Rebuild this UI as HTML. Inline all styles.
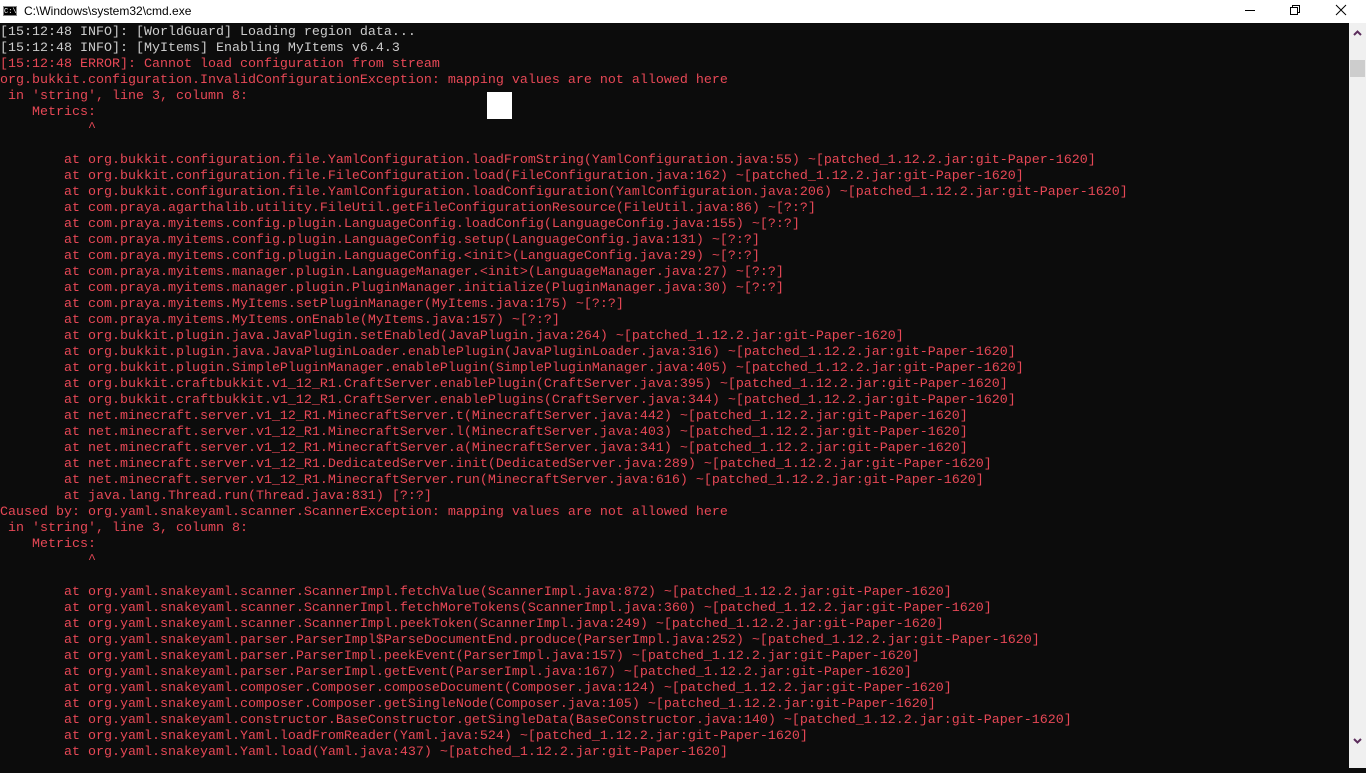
<!DOCTYPE html>
<html><head><meta charset="utf-8"><style>
html,body{margin:0;padding:0;width:1366px;height:768px;overflow:hidden;background:#0c0c0c;}
#tb{position:absolute;left:0;top:0;width:1366px;height:23px;background:#fff;font-family:"Liberation Sans",sans-serif;font-size:12px;color:#000;}
#tb .t{position:absolute;left:24px;top:4px;}
#ico{position:absolute;left:3px;top:6px;width:14px;height:10px;background:#000;border:1px solid #888;color:#fff;font-size:7px;line-height:10px;font-family:"Liberation Mono",monospace;box-sizing:border-box;}
#term{position:absolute;left:0;top:23px;width:1349px;height:745px;background:#0c0c0c;overflow:hidden;}
pre{margin:0;padding-top:2px;font-family:"Liberation Mono",monospace;font-size:13.33px;line-height:16px;color:#e74856;white-space:pre;}
.g{color:#cccccc;}
#sb{position:absolute;left:1349px;top:23px;width:17px;height:745px;background:#f0f0f0;}
#th{position:absolute;left:1350px;top:60px;width:15px;height:17px;background:#cdcdcd;}
#cur{position:absolute;left:487px;top:92px;width:25px;height:27px;background:#fff;}
</style></head><body>
<div id="tb"><div id="ico">C:\</div><span class="t">C:\Windows\system32\cmd.exe</span>
<svg style="position:absolute;left:1240px;top:0" width="126" height="23"><line x1="5" y1="10.5" x2="15" y2="10.5" stroke="#000"/><rect x="50.5" y="7.5" width="7" height="7" fill="none" stroke="#000"/><path d="M52.5 7.5V5.5H59.5V12.5H57.5" fill="none" stroke="#000"/><path d="M96 5L106 15M106 5L96 15" stroke="#000"/></svg></div>
<div id="term"><pre><span class="g">[15:12:48 INFO]: [WorldGuard] Loading region data...
[15:12:48 INFO]: [MyItems] Enabling MyItems v6.4.3</span>
[15:12:48 ERROR]: Cannot load configuration from stream
org.bukkit.configuration.InvalidConfigurationException: mapping values are not allowed here
 in 'string', line 3, column 8:
    Metrics:
           ^

        at org.bukkit.configuration.file.YamlConfiguration.loadFromString(YamlConfiguration.java:55) ~[patched_1.12.2.jar:git-Paper-1620]
        at org.bukkit.configuration.file.FileConfiguration.load(FileConfiguration.java:162) ~[patched_1.12.2.jar:git-Paper-1620]
        at org.bukkit.configuration.file.YamlConfiguration.loadConfiguration(YamlConfiguration.java:206) ~[patched_1.12.2.jar:git-Paper-1620]
        at com.praya.agarthalib.utility.FileUtil.getFileConfigurationResource(FileUtil.java:86) ~[?:?]
        at com.praya.myitems.config.plugin.LanguageConfig.loadConfig(LanguageConfig.java:155) ~[?:?]
        at com.praya.myitems.config.plugin.LanguageConfig.setup(LanguageConfig.java:131) ~[?:?]
        at com.praya.myitems.config.plugin.LanguageConfig.&lt;init&gt;(LanguageConfig.java:29) ~[?:?]
        at com.praya.myitems.manager.plugin.LanguageManager.&lt;init&gt;(LanguageManager.java:27) ~[?:?]
        at com.praya.myitems.manager.plugin.PluginManager.initialize(PluginManager.java:30) ~[?:?]
        at com.praya.myitems.MyItems.setPluginManager(MyItems.java:175) ~[?:?]
        at com.praya.myitems.MyItems.onEnable(MyItems.java:157) ~[?:?]
        at org.bukkit.plugin.java.JavaPlugin.setEnabled(JavaPlugin.java:264) ~[patched_1.12.2.jar:git-Paper-1620]
        at org.bukkit.plugin.java.JavaPluginLoader.enablePlugin(JavaPluginLoader.java:316) ~[patched_1.12.2.jar:git-Paper-1620]
        at org.bukkit.plugin.SimplePluginManager.enablePlugin(SimplePluginManager.java:405) ~[patched_1.12.2.jar:git-Paper-1620]
        at org.bukkit.craftbukkit.v1_12_R1.CraftServer.enablePlugin(CraftServer.java:395) ~[patched_1.12.2.jar:git-Paper-1620]
        at org.bukkit.craftbukkit.v1_12_R1.CraftServer.enablePlugins(CraftServer.java:344) ~[patched_1.12.2.jar:git-Paper-1620]
        at net.minecraft.server.v1_12_R1.MinecraftServer.t(MinecraftServer.java:442) ~[patched_1.12.2.jar:git-Paper-1620]
        at net.minecraft.server.v1_12_R1.MinecraftServer.l(MinecraftServer.java:403) ~[patched_1.12.2.jar:git-Paper-1620]
        at net.minecraft.server.v1_12_R1.MinecraftServer.a(MinecraftServer.java:341) ~[patched_1.12.2.jar:git-Paper-1620]
        at net.minecraft.server.v1_12_R1.DedicatedServer.init(DedicatedServer.java:289) ~[patched_1.12.2.jar:git-Paper-1620]
        at net.minecraft.server.v1_12_R1.MinecraftServer.run(MinecraftServer.java:616) ~[patched_1.12.2.jar:git-Paper-1620]
        at java.lang.Thread.run(Thread.java:831) [?:?]
Caused by: org.yaml.snakeyaml.scanner.ScannerException: mapping values are not allowed here
 in 'string', line 3, column 8:
    Metrics:
           ^

        at org.yaml.snakeyaml.scanner.ScannerImpl.fetchValue(ScannerImpl.java:872) ~[patched_1.12.2.jar:git-Paper-1620]
        at org.yaml.snakeyaml.scanner.ScannerImpl.fetchMoreTokens(ScannerImpl.java:360) ~[patched_1.12.2.jar:git-Paper-1620]
        at org.yaml.snakeyaml.scanner.ScannerImpl.peekToken(ScannerImpl.java:249) ~[patched_1.12.2.jar:git-Paper-1620]
        at org.yaml.snakeyaml.parser.ParserImpl$ParseDocumentEnd.produce(ParserImpl.java:252) ~[patched_1.12.2.jar:git-Paper-1620]
        at org.yaml.snakeyaml.parser.ParserImpl.peekEvent(ParserImpl.java:157) ~[patched_1.12.2.jar:git-Paper-1620]
        at org.yaml.snakeyaml.parser.ParserImpl.getEvent(ParserImpl.java:167) ~[patched_1.12.2.jar:git-Paper-1620]
        at org.yaml.snakeyaml.composer.Composer.composeDocument(Composer.java:124) ~[patched_1.12.2.jar:git-Paper-1620]
        at org.yaml.snakeyaml.composer.Composer.getSingleNode(Composer.java:105) ~[patched_1.12.2.jar:git-Paper-1620]
        at org.yaml.snakeyaml.constructor.BaseConstructor.getSingleData(BaseConstructor.java:140) ~[patched_1.12.2.jar:git-Paper-1620]
        at org.yaml.snakeyaml.Yaml.loadFromReader(Yaml.java:524) ~[patched_1.12.2.jar:git-Paper-1620]
        at org.yaml.snakeyaml.Yaml.load(Yaml.java:437) ~[patched_1.12.2.jar:git-Paper-1620]</pre></div>
<div id="cur"></div>
<div id="sb"><svg width="17" height="745"><path d="M5 12L8.5 8.5L12 12" fill="none" stroke="#5c2d5c" stroke-width="2"/><path d="M5 716L8.5 719.5L12 716" fill="none" stroke="#5c2d5c" stroke-width="2"/></svg></div>
<div id="th"></div>
</body></html>
